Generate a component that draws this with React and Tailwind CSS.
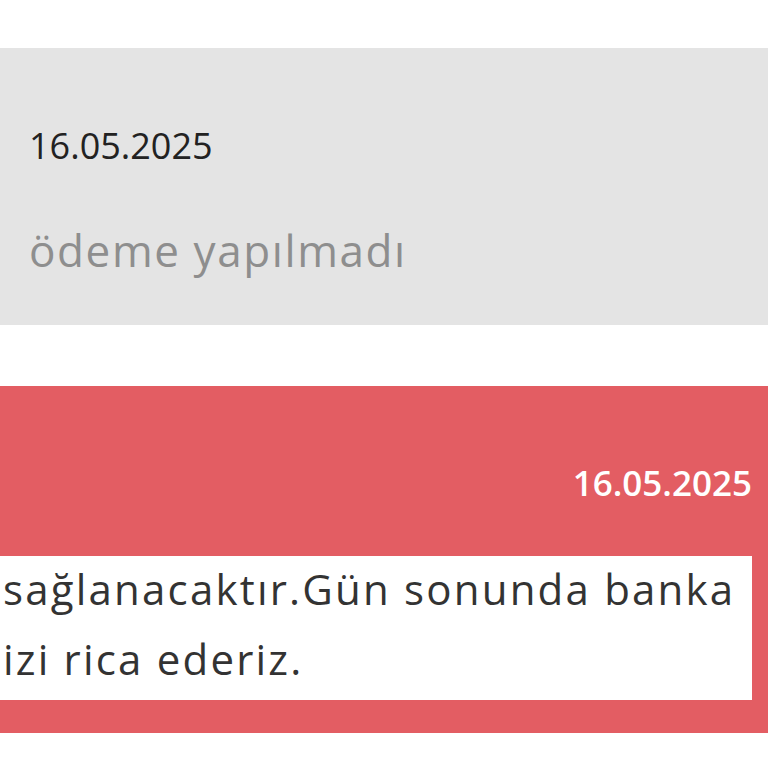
export default function App() {
  return (
    <div className="w-[768px] h-[768px] bg-white overflow-hidden" style={{ fontFamily: '"Open Sans", "Liberation Sans", sans-serif' }}>
      <div className="h-[48px]" />
      <div className="h-[277px] bg-[#e4e4e4] pl-[29px] pt-[80px]">
        <div className="text-[36px] leading-[36px] text-[#222]">16.05.2025</div>
        <div className="mt-[64px] text-[44px] leading-[44px] text-[#8e8e8e] tracking-[1.6px]">ödeme yapılmadı</div>
      </div>
      <div className="h-[61px]" />
      <div className="h-[347px] bg-[#e35d63] flex flex-col pt-[79px]">
        <div className="flex justify-end pr-[16px]">
          <div className="text-[35px] leading-[36px] text-white font-semibold">16.05.2025</div>
        </div>
        <div className="mt-[55px] w-[752px] h-[144px] bg-white overflow-hidden pl-[3px]">
          <div className="-mt-[2px] text-[42px] leading-[70px] text-[#333] tracking-[2.2px] whitespace-nowrap">
            <div>sağlanacaktır.Gün sonunda banka</div>
            <div>izi rica ederiz.</div>
          </div>
        </div>
      </div>
    </div>
  );
}
